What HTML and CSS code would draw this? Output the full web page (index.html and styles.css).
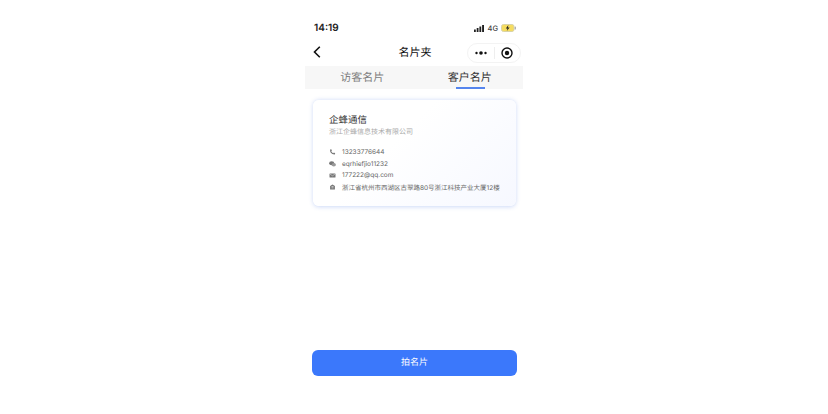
FILE: index.html
```html
<!DOCTYPE html>
<html lang="zh-CN">
<head>
    <meta charset="UTF-8">
    <title>名片夹</title>
    <link rel="stylesheet" href="styles.css">
</head>
<body>
    <div class="phone">
        <div class="status-bar">
            <span class="time">14:19</span>
            <div class="status-icons">
                <svg width="10" height="7" viewBox="0 0 10 7"><rect x="0" y="4.5" width="1.8" height="2.5" fill="#222"/><rect x="2.7" y="3" width="1.8" height="4" fill="#222"/><rect x="5.4" y="1.5" width="1.8" height="5.5" fill="#222"/><rect x="8.1" y="0" width="1.9" height="7" fill="#222"/></svg>
                <span class="net">4G</span>
                <svg width="15" height="8" viewBox="0 0 15 8"><rect x="0.5" y="0.5" width="12.5" height="7" rx="2" fill="#f5dc60" stroke="#d8d3a8"/><rect x="13.6" y="2.5" width="1.3" height="3" rx="0.6" fill="#aaa"/><path d="M7.4 1 L4.8 4.4 H6.5 L5.8 7 L8.6 3.6 H6.9 Z" fill="#222"/></svg>
            </div>
        </div>
        <div class="nav-bar">
            <svg class="back" width="8" height="12" viewBox="0 0 8 12"><path d="M6.8 0.8 L1.5 6 L6.8 11.2" fill="none" stroke="#111" stroke-width="1.6"/></svg>
            <span class="nav-title">名片夹</span>
            <div class="capsule">
                <div class="capsule-part">
                    <svg width="12" height="4" viewBox="0 0 12 4"><circle cx="1.5" cy="2" r="1.2" fill="#111"/><circle cx="6" cy="2" r="1.8" fill="#111"/><circle cx="10.5" cy="2" r="1.2" fill="#111"/></svg>
                </div>
                <div class="capsule-line"></div>
                <div class="capsule-part">
                    <svg width="12" height="12" viewBox="0 0 12 12"><circle cx="6" cy="6" r="5" fill="none" stroke="#111" stroke-width="1.4"/><circle cx="6" cy="6" r="2.2" fill="#111"/></svg>
                </div>
            </div>
        </div>
        <div class="tabs">
            <div class="tab">访客名片</div>
            <div class="tab active">客户名片</div>
        </div>
        <div class="content">
            <div class="card">
                <div class="card-name">企蜂通信</div>
                <div class="card-company">浙江企蜂信息技术有限公司</div>
                <div class="card-rows">
                    <div class="card-row">
                        <svg width="6" height="6" viewBox="0 0 6 6"><path d="M0.6 0.6 L1.8 0.3 L2.4 1.7 L1.7 2.3 Q2.5 3.6 3.8 4.2 L4.4 3.5 L5.7 4.2 L5.3 5.4 Q2.8 5.6 1.3 3.8 Q0.3 2.4 0.6 0.6 Z" fill="#777"/></svg>
                        <span>13233776644</span>
                    </div>
                    <div class="card-row">
                        <svg width="7" height="6" viewBox="0 0 7 6"><ellipse cx="2.7" cy="2.3" rx="2.6" ry="2" fill="#777"/><ellipse cx="4.8" cy="3.8" rx="2.1" ry="1.7" fill="#999"/></svg>
                        <span>eqrhiefjio11232</span>
                    </div>
                    <div class="card-row">
                        <svg width="6" height="5" viewBox="0 0 6 5"><rect x="0" y="0.4" width="6" height="4.2" rx="0.6" fill="#777"/><path d="M0.4 1 L3 2.8 L5.6 1" fill="none" stroke="#eee" stroke-width="0.5"/></svg>
                        <span>177222@qq.com</span>
                    </div>
                    <div class="card-row">
                        <svg width="6" height="6" viewBox="0 0 6 6"><path d="M0.6 5.6 V2 L3 0.4 L5.4 2 V5.6 Z" fill="#777"/><rect x="2" y="2.2" width="2" height="0.6" fill="#eee"/><rect x="2" y="3.6" width="2" height="0.6" fill="#eee"/></svg>
                        <span>浙江省杭州市西湖区古翠路80号浙江科技产业大厦12楼</span>
                    </div>
                </div>
            </div>
        </div>
        <div class="footer">
            <div class="scan-btn">拍名片</div>
        </div>
    </div>
</body>
</html>
```

FILE: styles.css
```css
* {
    box-sizing: border-box;
}

body {
    margin: 0;
    background: #fff;
    font-family: 'Inter', 'Noto Sans CJK SC', sans-serif;
    text-rendering: geometricPrecision;
    display: flex;
    justify-content: center;
}

.phone {
    width: 218px;
    height: 414px;
    display: flex;
    flex-direction: column;
}

.status-bar {
    height: 40px;
    padding: 16px 7px 0 9px;
    display: flex;
    justify-content: space-between;
    align-items: center;
}

.time {
    font-size: 10px;
    font-weight: 600;
    color: #222;
}

.status-icons {
    display: flex;
    align-items: center;
    gap: 3px;
}

.net {
    font-size: 7.5px;
    font-weight: 500;
    color: #444;
}

.nav-bar {
    position: relative;
    height: 26px;
    display: flex;
    align-items: center;
    justify-content: space-between;
    padding: 0 2px 0 8px;
}

.back {
    margin-bottom: 2px;
}

.nav-title {
    position: absolute;
    left: 2px;
    right: 0;
    margin-top: -2px;
    text-align: center;
    font-size: 11px;
    font-weight: 400;
    color: #111;
}

.capsule {
    position: relative;
    width: 54px;
    height: 20px;
    display: flex;
    align-items: center;
    border: 1px solid #f3f3f3;
    border-radius: 10px;
    background: #fff;
}

.capsule-part {
    flex: 1;
    display: flex;
    justify-content: center;
    align-items: center;
}

.capsule-line {
    width: 1px;
    height: 12px;
    background: #eee;
}

.tabs {
    height: 23px;
    padding-left: 4px;
    background: #f7f7f7;
    display: flex;
}

.tab {
    flex: 1;
    position: relative;
    text-align: center;
    font-size: 11px;
    line-height: 23px;
    color: #808080;
}

.tab.active {
    color: #333;
    padding-left: 1px;
}

.tab.active::after {
    content: "";
    position: absolute;
    left: 40px;
    bottom: 0;
    width: 29px;
    height: 2px;
    background: #5585ee;
}

.content {
    flex: 1;
    padding: 11px 7px 0 8px;
}

.card {
    height: 106px;
    padding: 14px 16px 0;
    border-radius: 6px;
    background: linear-gradient(135deg, #fff 40%, #f6f8ff);
    box-shadow: 0 0.5px 4px rgba(90, 130, 230, 0.3);
}

.card-name {
    font-size: 9.5px;
    line-height: 13px;
    font-weight: 400;
    color: #333;
}

.card-company {
    font-size: 7px;
    line-height: 9px;
    color: #aaa;
}

.card-rows {
    margin-top: 11px;
    display: flex;
    flex-direction: column;
    gap: 1.6px;
}

.card-row {
    height: 10px;
    display: flex;
    align-items: center;
    gap: 6px;
    font-size: 6.5px;
    color: #666;
    white-space: nowrap;
}

.card-row svg {
    width: 7px;
    flex: none;
}

.footer {
    padding: 0 6px 38px 7px;
}

.scan-btn {
    height: 26px;
    border-radius: 6px;
    background: #3b78fb;
    color: #fff;
    text-align: center;
    font-size: 9px;
    line-height: 26px;
}
```
